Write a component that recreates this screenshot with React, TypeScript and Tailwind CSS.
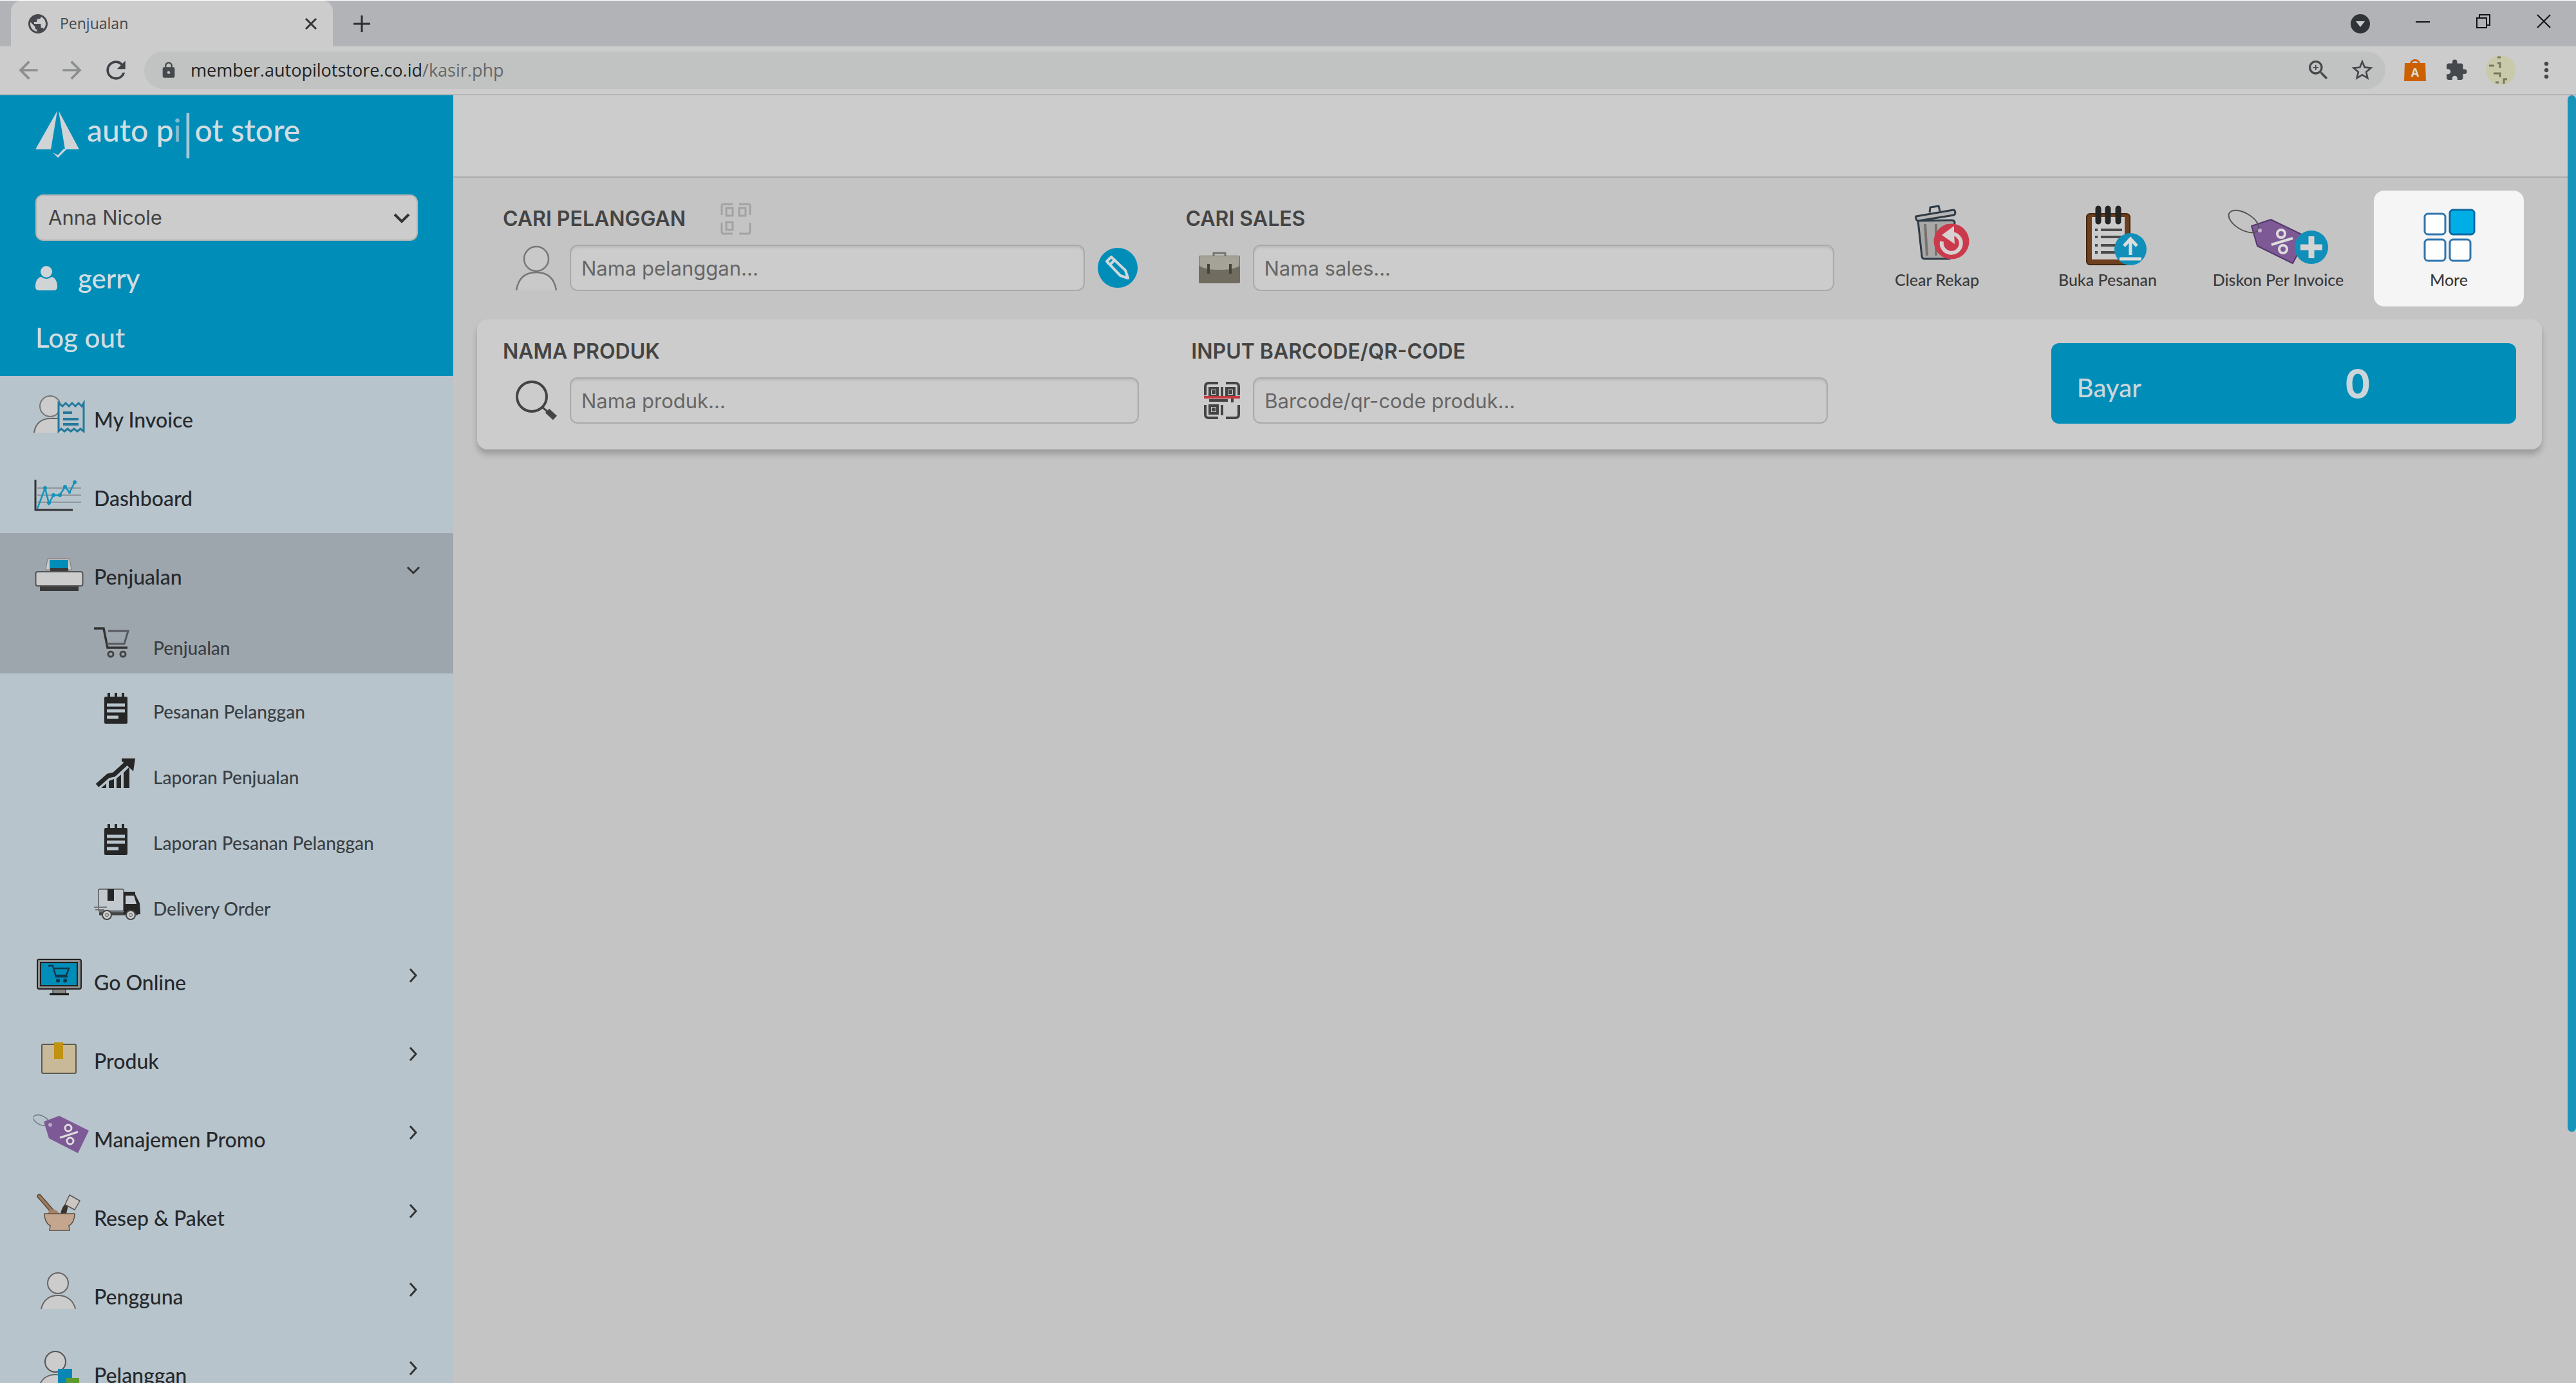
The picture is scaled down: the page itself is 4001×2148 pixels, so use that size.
import type { ReactNode } from 'react';
import { MdArrowBack, MdArrowForward, MdExtension, MdLock, MdMoreVert, MdPublic, MdRefresh, MdStarBorder, MdZoomIn } from 'react-icons/md';

function MenuSvg({ children }: { children: ReactNode }) {
  return (
    <svg viewBox="0 0 88 72" className="w-22 h-18 shrink-0" fill="none" aria-hidden="true">
      {children}
    </svg>
  );
}

const icons = {
  invoice: (
    <MenuSvg>
      <path d="M1 63C3 49 12 41 26 41s18 6 20 22z" fill="#ccc" />
      <path d="M1 63C3 49 12 41 26 41h12" stroke="#666" strokeWidth="2" />
      <circle cx="26" cy="22" r="16" fill="#ccc" stroke="#777" strokeWidth="2" />
      <path d="M39 17l6 5 5-5 5 5 5-5 5 5 5-5 5 5 3-5v44l-5-4-5 4-5-4-5 4-5-4-5 4-5-4-4 4z" fill="#b7c4cc" stroke="#23799c" strokeWidth="3" />
      <path d="M46 32h14M46 42h24M46 50h24" stroke="#23799c" strokeWidth="4" />
    </MenuSvg>
  ),
  dashboard: (
    <MenuSvg>
      <path d="M6 27h68M6 38h68M6 49h68" stroke="#8f979c" strokeWidth="2" />
      <path d="M3 14v47h58" stroke="#333" strokeWidth="3" />
      <path d="M6 59L18 27l6 24 7-13h10l8-13 7 9 8-16" stroke="#1593bb" strokeWidth="2.5" />
      <g fill="#1593bb">
        <circle cx="18" cy="27" r="3" /><circle cx="24" cy="50" r="3" /><circle cx="31" cy="38" r="3" />
        <circle cx="41" cy="38" r="3" /><circle cx="49" cy="25" r="3" /><circle cx="56" cy="34" r="2" /><circle cx="64" cy="18" r="3" />
      </g>
    </MenuSvg>
  ),
  printer: (
    <MenuSvg>
      <path d="M22 15h34l3 17H19z" fill="#ccc" stroke="#777" />
      <path d="M25 17h29v14H25z" fill="#008db8" />
      <path d="M26 29h28v6H26z" fill="#3a3a3a" />
      <path d="M10 56h60v9H10z" fill="#3a3a3a" />
      <rect x="3.5" y="35" width="73" height="22" rx="3" fill="#ccc" stroke="#555" strokeWidth="2" />
    </MenuSvg>
  ),
  cart: (
    <MenuSvg>
      <path d="M0 14h15l6 30h31" stroke="#333" strokeWidth="3.5" />
      <path d="M22 18h31l-6 20H20" stroke="#565a60" strokeWidth="3" />
      <circle cx="26" cy="54" r="4" stroke="#444" strokeWidth="3" />
      <circle cx="45" cy="54" r="4" stroke="#444" strokeWidth="3" />
    </MenuSvg>
  ),
  notepad: (
    <MenuSvg>
      <path d="M23 15v10M34 15v10M45 15v10" stroke="#262626" strokeWidth="4" />
      <rect x="16" y="21" width="36" height="42" rx="2" fill="#262626" />
      <path d="M20 34h28M20 43h28M20 53h18" stroke="#b7c4cc" strokeWidth="5" />
    </MenuSvg>
  ),
  growth: (
    <MenuSvg>
      <path d="M5 57l17-15 9-2 22-20" stroke="#262626" strokeWidth="7" />
      <path d="M43 15h21l-3 20-6-6-12-10z" fill="#262626" />
      <path d="M11 61l8-7v7zM23 50l8-3v14h-8zM35 46l7-6v21h-7zM46 37l9-9v33h-9z" fill="#262626" />
    </MenuSvg>
  ),
  truck: (
    <MenuSvg>
      <path d="M8 52h60" stroke="#444" strokeWidth="5" />
      <rect x="7" y="14" width="39" height="34" rx="2" fill="#c2cad0" stroke="#555" strokeWidth="1.5" />
      <path d="M21 14h10v18H21z" fill="#262626" />
      <path d="M46 18h18v4l7 14 1 17H46z" fill="#262626" />
      <path d="M49 24h13l4 13H49z" fill="#c2cad0" />
      <path d="M0 42h20M2 46h14" stroke="#777" strokeWidth="2" />
      <circle cx="20" cy="54" r="7" fill="#ccc" stroke="#444" strokeWidth="2" />
      <circle cx="57" cy="54" r="7" fill="#ccc" stroke="#444" strokeWidth="2" />
      <circle cx="20" cy="54" r="2.5" stroke="#555" />
      <circle cx="57" cy="54" r="2.5" stroke="#555" />
    </MenuSvg>
  ),
  monitor: (
    <MenuSvg>
      <path d="M30 53h20v8H30z" fill="#888" stroke="#222" />
      <path d="M25 61h30" stroke="#111" strokeWidth="3" />
      <rect x="6" y="7" width="68" height="46" rx="3" fill="#8f8f8f" stroke="#222" strokeWidth="2" />
      <rect x="11" y="12" width="57" height="36" fill="#008db8" stroke="#222" strokeWidth="2" />
      <path d="M23 17h7l5 17h18M32 21h23l-4 11H35" stroke="#12384a" strokeWidth="2.5" />
      <circle cx="38" cy="40" r="3" fill="#12384a" /><circle cx="49" cy="40" r="3" fill="#12384a" />
    </MenuSvg>
  ),
  box: (
    <MenuSvg>
      <rect x="13" y="17" width="53" height="45" rx="2" fill="#c8ba98" stroke="#5c5a52" strokeWidth="2" />
      <path d="M32 14h14v26H32z" fill="#c09112" />
    </MenuSvg>
  ),
  tag: (
    <MenuSvg>
      <ellipse cx="12" cy="13" rx="13" ry="7" transform="rotate(25 12 13)" stroke="#6b777c" strokeWidth="1.5" />
      <path d="M16 15L40 6l46 23-17 35-45-23z" fill="#7d5a96" />
      <circle cx="26" cy="20" r="3" fill="#b7a8c4" />
      <circle cx="54" cy="25" r="5" stroke="#ddd" strokeWidth="3" />
      <circle cx="57" cy="45" r="5" stroke="#ddd" strokeWidth="3" />
      <path d="M41 40l28-9" stroke="#ddd" strokeWidth="3" />
    </MenuSvg>
  ),
  bowl: (
    <MenuSvg>
      <path d="M9 9l20 23" stroke="#5c4a3a" strokeWidth="7" strokeLinecap="round" />
      <path d="M9 9l20 23" stroke="#9c7a5c" strokeWidth="4" strokeLinecap="round" />
      <path d="M22 36c2-8 12-10 18 0z" fill="#a58263" />
      <path d="M42 36c2-10 6-15 11-18l1 5-3 13z" fill="#3b332e" />
      <path d="M56 7l16 9-8 14-15-8z" fill="#cdc5bf" stroke="#555" strokeWidth="1.5" strokeLinejoin="round" />
      <path d="M17 36h47c0 10-4 16-9 19l1 7H25l1-7c-5-3-9-9-9-19z" fill="#c3a68d" stroke="#5c4f45" strokeWidth="1.5" />
    </MenuSvg>
  ),
  user: (
    <MenuSvg>
      <path d="M12 62c3-14 13-21 26-21s24 7 27 21z" fill="#ccc" />
      <path d="M12 62c3-14 13-21 26-21s24 7 27 21" stroke="#666" strokeWidth="2" />
      <circle cx="38" cy="22" r="16" fill="#ccc" stroke="#666" strokeWidth="2" />
    </MenuSvg>
  ),
  customer: (
    <MenuSvg>
      <path d="M8 64c3-15 13-22 26-22s24 7 27 22z" fill="#ccc" stroke="#666" strokeWidth="2" />
      <circle cx="34" cy="22" r="16" fill="#ccc" stroke="#555" strokeWidth="2" />
      <path d="M38 33h22v35H38z" fill="#0a86b4" />
      <path d="M51 47h20v24H51z" fill="#5e9a2c" />
    </MenuSvg>
  ),
};

function Chevron({ open }: { open?: boolean }) {
  return (
    <svg viewBox="0 0 32 32" className="w-8 h-8 mb-2 ml-auto" fill="none" stroke="#333" strokeWidth="3" aria-hidden="true">
      <path d={open ? 'M7 12l9 9 9-9' : 'M11 6l9 10-9 10'} />
    </svg>
  );
}

function MenuItem({ icon, label, arrow }: { icon: ReactNode; label: string; arrow?: 'open' | 'closed' }) {
  return (
    <a href="#" className="flex items-center gap-1.5 h-[122px] shrink-0 pl-[52px] pr-[46px]">
      {icon}
      <span className="pt-3.5 text-[32px] leading-10 font-medium text-[#26292c]">{label}</span>
      {arrow && <Chevron open={arrow === 'open'} />}
    </a>
  );
}

function SubItem({ icon, label }: { icon: ReactNode; label: string }) {
  return (
    <a href="#" className="flex items-center gap-1 h-[102px] pl-[146px]">
      {icon}
      <span className="pt-4 text-[28px] leading-10 font-medium text-[#3a3f43]">{label}</span>
    </a>
  );
}

function BrowserBar() {
  return (
    <header className="border-t border-white bg-[#b1b3b7] font-['Open_Sans',sans-serif]">
      <div className="flex items-center h-[71px] pl-[17px]">
        <div className="flex items-center w-[500px] h-full px-6 bg-[#ccc] rounded-t-2xl">
          <MdPublic className="size-9 text-[#45494e]" />
          <span className="ml-4 text-[23px] text-[#45494e]">Penjualan</span>
          <button aria-label="Tutup tab" className="ml-auto">
            <svg viewBox="0 0 20 20" className="size-5" stroke="#333" strokeWidth="3"><path d="M2 2l16 16M18 2L2 18" /></svg>
          </button>
        </div>
        <button aria-label="Tab baru" className="ml-8">
          <svg viewBox="0 0 26 26" className="size-[26px]" stroke="#2b2d30" strokeWidth="3"><path d="M13 0v26M0 13h26" /></svg>
        </button>
        <div className="flex items-center gap-[70px] ml-auto pr-[38px]">
          <svg viewBox="0 0 30 30" className="size-[30px]"><circle cx="15" cy="15" r="15" fill="#303338" /><path d="M8 11h14l-7 9z" fill="#ccc" /></svg>
          <button aria-label="Perkecil"><svg viewBox="0 0 24 24" className="size-6 mb-2" stroke="#111" strokeWidth="2"><path d="M1 13h22" /></svg></button>
          <button aria-label="Pulihkan"><svg viewBox="0 0 24 24" className="size-6 mb-2" fill="none" stroke="#111" strokeWidth="2"><path d="M2 7h15v15H2zM6 7V2h16v16h-5" /></svg></button>
          <button aria-label="Tutup"><svg viewBox="0 0 24 24" className="size-6 mb-2" stroke="#111" strokeWidth="2"><path d="M2 2l20 20M22 2L2 22" /></svg></button>
        </div>
      </div>
      <div className="flex items-center h-[76px] bg-[#ccc] border-b-2 border-[#b4b4b4] pl-[22px] pr-[26px]">
        <div className="flex items-center gap-6 w-[202px]">
          <MdArrowBack className="size-11 text-[#8c8e90]" />
          <MdArrowForward className="size-11 text-[#8c8e90]" />
          <MdRefresh className="size-11 text-[#3f4347]" />
        </div>
        <div className="flex items-center flex-1 h-[58px] pl-6 pr-4 rounded-full bg-[#c1c3c2]">
          <MdLock className="size-7 text-[#45494e]" />
          <span className="ml-5 text-[27px] text-[#222]">member.autopilotstore.co.id<span className="text-[#666]">/kasir.php</span></span>
          <div className="flex items-center gap-7 ml-auto text-[#45494e]">
            <MdZoomIn className="size-10" />
            <MdStarBorder className="size-10" />
          </div>
        </div>
        <div className="flex items-center gap-7 ml-7 text-[#45494e]">
          <svg viewBox="0 0 36 36" className="size-9">
            <path d="M2 7h32l1 28H1z" fill="#cc6000" />
            <path d="M11 10c0-10 14-10 14 0" fill="none" stroke="#cc6000" strokeWidth="3" />
            <text x="18" y="28" textAnchor="middle" fontSize="18" fontWeight="700" fill="#ddd">A</text>
          </svg>
          <MdExtension className="size-9" />
          <svg viewBox="0 0 46 46" className="size-[46px]">
            <circle cx="23" cy="23" r="23" fill="#c9c9ab" />
            <path d="M18 3h5M5 16h8M18 12h4v8M12 28h10v6M15 42h5M28 44v-7h5" fill="none" stroke="#77775f" strokeWidth="3" />
          </svg>
          <MdMoreVert className="size-10" />
        </div>
      </div>
    </header>
  );
}

function Sidebar() {
  return (
    <aside className="w-[704px] shrink-0 bg-[#b7c4cc] overflow-hidden">
      <div className="px-[55px] pt-6 pb-[30px] bg-[#008db8] text-[#d2dde2]">
        <div className="flex h-[74px]">
          <svg viewBox="0 0 68 74" className="w-[68px] h-[74px]" fill="#d0d4d6">
            <path d="M34 0L0 60h24zM36 0l32 60H46z" />
            <path d="M27 65l8 8 14-14h-5l-9 10z" />
          </svg>
          <div className="flex items-start ml-3 text-[48px] leading-[60px] font-medium">
            <span>auto p</span>
            <span className="text-[#7fbdd4]">i</span>
            <span className="text-[96px] leading-[74px] font-light text-[#a3c9d8]">l</span>
            <span>ot store</span>
          </div>
        </div>
        <div className="relative mt-14">
          <select aria-label="Toko" className="appearance-none block w-full h-[72px] px-[18px] rounded-xl border-2 border-[#b5b5b5] bg-[#ccc] font-['Inter',sans-serif] text-[31px] text-[#444]">
            <option>Anna Nicole</option>
          </select>
          <svg viewBox="0 0 26 18" className="absolute right-3 top-[28px] w-[26px] h-[18px] pointer-events-none" fill="none" stroke="#333" strokeWidth="4"><path d="M2 3l11 11L24 3" /></svg>
        </div>
        <div className="flex items-center h-[60px] mt-[28px] text-[42px] leading-[60px] font-medium">
          <svg viewBox="0 0 34 40" className="w-[34px] h-10" fill="#d0d4d6">
            <circle cx="17" cy="10" r="9" />
            <path d="M0 33c0-9 4-14 9-15 5 4 11 4 16 0 5 1 9 6 9 15 0 4-2 6-6 6H6c-4 0-6-2-6-6z" />
          </svg>
          <span className="ml-8">gerry</span>
        </div>
        <a href="#" className="block h-[60px] mt-8 text-[42px] leading-[60px] font-medium">Log out</a>
      </div>
      <nav>
        <MenuItem icon={icons.invoice} label="My Invoice" />
        <MenuItem icon={icons.dashboard} label="Dashboard" />
        <div className="flex flex-col h-[218px] bg-[#9ea6ad]">
          <MenuItem icon={icons.printer} label="Penjualan" arrow="open" />
          <SubItem icon={icons.cart} label="Penjualan" />
        </div>
        <SubItem icon={icons.notepad} label="Pesanan Pelanggan" />
        <SubItem icon={icons.growth} label="Laporan Penjualan" />
        <SubItem icon={icons.notepad} label="Laporan Pesanan Pelanggan" />
        <SubItem icon={icons.truck} label="Delivery Order" />
        <div className="pt-1">
          <MenuItem icon={icons.monitor} label="Go Online" arrow="closed" />
          <MenuItem icon={icons.box} label="Produk" arrow="closed" />
          <MenuItem icon={icons.tag} label="Manajemen Promo" arrow="closed" />
          <MenuItem icon={icons.bowl} label="Resep & Paket" arrow="closed" />
          <MenuItem icon={icons.user} label="Pengguna" arrow="closed" />
          <MenuItem icon={icons.customer} label="Pelanggan" arrow="closed" />
        </div>
      </nav>
    </aside>
  );
}

type FieldProps = { id: string; label: string; placeholder: string; icon: ReactNode; extra?: ReactNode; after?: ReactNode };

function Field({ id, label, placeholder, icon, extra, after }: FieldProps) {
  return (
    <div className="font-['Inter',sans-serif]">
      <div className="flex items-center h-12 gap-[54px]">
        <label htmlFor={id} className="text-[32px] font-semibold text-[#444]">{label}</label>
        {extra}
      </div>
      <div className="flex items-center gap-5 pl-5 mt-4">
        {icon}
        <input
          id={id}
          type="text"
          placeholder={placeholder}
          className="flex-1 min-w-0 h-[72px] px-4 rounded-xl border-2 border-[#aaa] bg-[#ccc] text-[31px] text-[#444] placeholder:text-[#666] shadow-[inset_0_3px_3px_rgba(0,0,0,0.08)]"
        />
        {after}
      </div>
    </div>
  );
}

function ActionButton({ label, active, children }: { label: string; active?: boolean; children: ReactNode }) {
  return (
    <button className={`flex flex-col items-center w-[233px] h-[180px] pt-[22px] rounded-2xl ${active ? 'bg-[#f5f5f5]' : ''}`}>
      <svg viewBox="0 0 160 96" className="w-40 h-24" fill="none" aria-hidden="true">{children}</svg>
      <span className="mt-1 text-[25px] leading-8 font-medium text-[#3a3a3a]">{label}</span>
    </button>
  );
}

function Actions() {
  return (
    <div className="flex gap-8">
      <ActionButton label="Clear Rekap">
        <path d="M68 12l1-8 13-2 2 8" stroke="#2f3b45" strokeWidth="3" />
        <path d="M50 25l6 55c0 3 2 4 5 4h38l8-56c0-3-2-4-5-4z" fill="#a9a9a9" stroke="#2f3b45" strokeWidth="3" />
        <path d="M61 30l3 49M78 30v49M95 30l-2 20" stroke="#77736c" strokeWidth="4" />
        <path d="M47 18l58-10c3 0 4 6 1 8L50 25c-3 0-4-6-3-7z" fill="#b5b5b5" stroke="#2f3b45" strokeWidth="3" />
        <circle cx="102" cy="57" r="27.5" fill="#cb3a4c" />
        <path d="M87 57a15 15 0 1 0 17-12" stroke="#d6d0d0" strokeWidth="6" />
        <path d="M87 47l19-14v12l1 16z" fill="#d6d0d0" />
      </ActionButton>
      <ActionButton label="Buka Pesanan">
        <rect x="47" y="14" width="67" height="79" rx="5" fill="#6d3f1f" stroke="#43260f" strokeWidth="2" />
        <path d="M55 19h51v66H55z" fill="#ccc" />
        <path d="M65 6v20M80 6v20M96 6v20" stroke="#242424" strokeWidth="9" strokeLinecap="round" />
        <path d="M60 39h4M60 50h4M60 63h4M60 74h4M69 39h33M69 50h33M69 63h33M69 74h33" stroke="#4a4a4a" strokeWidth="4" />
        <circle cx="115" cy="69" r="25" fill="#0f8fb9" />
        <path d="M115 78V54M105 64l10-11 10 11M98 84h34" stroke="#ddd" strokeWidth="5" />
      </ActionButton>
      <ActionButton label="Diskon Per Invoice">
        <path d="M38 33l30-10 56 27-22 41-55-27z" fill="#7d5a96" stroke="#54386b" strokeWidth="2" strokeLinejoin="round" />
        <ellipse cx="26" cy="26" rx="26" ry="13" transform="rotate(30 26 26)" stroke="#555" strokeWidth="2" />
        <circle cx="51" cy="40" r="3" fill="#c4b4d0" />
        <circle cx="84" cy="45" r="6" stroke="#ddd" strokeWidth="4" />
        <circle cx="87" cy="69" r="6" stroke="#ddd" strokeWidth="4" />
        <path d="M69 62l33-10" stroke="#ddd" strokeWidth="4" />
        <circle cx="131" cy="66" r="26" fill="#0f8fb9" />
        <path d="M131 49v34M114 66h34" stroke="#d4d4d4" strokeWidth="9" />
      </ActionButton>
      <ActionButton label="More" active>
        <g fill="#fff" stroke="#2f75ad" strokeWidth="3">
          <rect x="42" y="14" width="32" height="32" rx="5" />
          <rect x="42" y="54" width="32" height="33" rx="5" />
          <rect x="81" y="54" width="32" height="33" rx="5" />
          <rect x="81" y="8" width="38" height="38" rx="5" fill="#00aee6" stroke="#0b69a3" />
        </g>
      </ActionButton>
    </div>
  );
}

const personIcon = (
  <svg viewBox="0 0 64 70" className="w-16 h-[70px] shrink-0" fill="#c9c9c9" stroke="#777" strokeWidth="2.5">
    <circle cx="32" cy="21" r="19" />
    <path d="M1 70c3-19 14-28 31-28s28 9 31 28" />
  </svg>
);

const briefcaseIcon = (
  <svg viewBox="0 0 64 50" className="w-16 h-[50px] shrink-0">
    <path d="M23 7V2h18v5" fill="none" stroke="#77746a" strokeWidth="3" />
    <rect y="6" width="64" height="43" rx="2" fill="#706c5f" />
    <path d="M1 7h62v15c-8 5-18 6-31 6S9 27 1 22z" fill="#a5a398" />
    <path d="M15 19v15M49 19v15" stroke="#45423a" strokeWidth="4" />
  </svg>
);

const searchIcon = (
  <svg viewBox="0 0 64 64" className="size-16 shrink-0" fill="none" stroke="#444">
    <circle cx="25" cy="26" r="23" strokeWidth="4" />
    <path d="M42 43l7 6" strokeWidth="3" />
    <path d="M49 48l12 11" strokeWidth="9" />
  </svg>
);

const scanIcon = (
  <svg viewBox="0 0 56 58" className="w-14 h-[58px] shrink-0" fill="none" stroke="#444" strokeWidth="4">
    <path d="M22 2H7c-3 0-5 2-5 5v14M34 2h15c3 0 5 2 5 5v14M22 56H7c-3 0-5-2-5-5V36M34 56h15c3 0 5-2 5-5V36" />
    <path d="M9 10h12v12H9zM35 10h12v12H35zM9 37h12v12H9zM28 8v14M28 36v16M8 29h29M44 26v6" />
    <path d="M14 15h2v2h-2zM40 15h2v2h-2zM14 42h2v2h-2z" />
    <path d="M0 24h56" stroke="#c33b41" />
  </svg>
);

const faintScanIcon = (
  <svg viewBox="0 0 48 50" className="w-12 h-[50px]" fill="none" stroke="#a2a2a2" strokeWidth="3">
    <path d="M19 2H5c-2 0-3 1-3 3v14M29 2h14c2 0 3 1 3 3v14M19 48H5c-2 0-3-1-3-3V31M29 48h14c2 0 3-1 3-3V31" />
    <path d="M9 8h10v12H9zM29 8h10v12H29zM9 30h10v12H9z" />
  </svg>
);

const editButton = (
  <button aria-label="Ubah pelanggan" className="shrink-0">
    <svg viewBox="0 0 62 62" className="size-[62px]">
      <circle cx="31" cy="31" r="31" fill="#008db8" />
      <path d="M14 21l7-7 22 21 4 12-12-4zM19 26l7-7" fill="none" stroke="#d0d8dc" strokeWidth="4" strokeLinejoin="round" />
    </svg>
  </button>
);

function Cashier() {
  return (
    <main className="flex-1 min-w-0 bg-[#c4c4c4]">
      <div className="h-32 bg-[#ccc] border-b-2 border-[#adadad]" />
      <section className="grid grid-cols-[1017fr_1007fr_auto] gap-x-[43px] py-5 pl-[77px] pr-17">
        <div className="pt-5 pr-8">
          <Field id="pelanggan" label="CARI PELANGGAN" placeholder="Nama pelanggan..." icon={personIcon} extra={faintScanIcon} after={editButton} />
        </div>
        <div className="pt-5">
          <Field id="sales" label="CARI SALES" placeholder="Nama sales..." icon={briefcaseIcon} />
        </div>
        <Actions />
      </section>
      <section className="grid grid-cols-[988fr_1254fr_722fr] gap-x-[81px] ml-[37px] mr-10 pt-[26px] pb-10 pl-10 pr-10 rounded-2xl bg-[#ccc] shadow-[0_8px_10px_rgba(0,0,0,0.2)]">
        <Field id="produk" label="NAMA PRODUK" placeholder="Nama produk..." icon={searchIcon} />
        <div className="pr-[266px]">
          <Field id="barcode" label="INPUT BARCODE/QR-CODE" placeholder="Barcode/qr-code produk..." icon={scanIcon} />
        </div>
        <button className="flex items-center self-end h-[125px] pl-10 rounded-xl bg-[#008db8] text-[#ccd6da]">
          <span className="w-[416px] pt-3 text-left text-[40px] font-medium">Bayar</span>
          <span className="font-['Inter',sans-serif] text-[60px] leading-[60px] font-bold">0</span>
        </button>
      </section>
    </main>
  );
}

export default function App() {
  return (
    <div className="flex flex-col h-screen overflow-hidden bg-[#c4c4c4] font-['Lato',sans-serif]">
      <BrowserBar />
      <div className="flex flex-1 min-h-0">
        <Sidebar />
        <Cashier />
        <div className="w-[13px] shrink-0 bg-[#c4c4c4]">
          <div className="h-[80.5%] rounded-full bg-[#1994b9]" />
        </div>
      </div>
    </div>
  );
}
